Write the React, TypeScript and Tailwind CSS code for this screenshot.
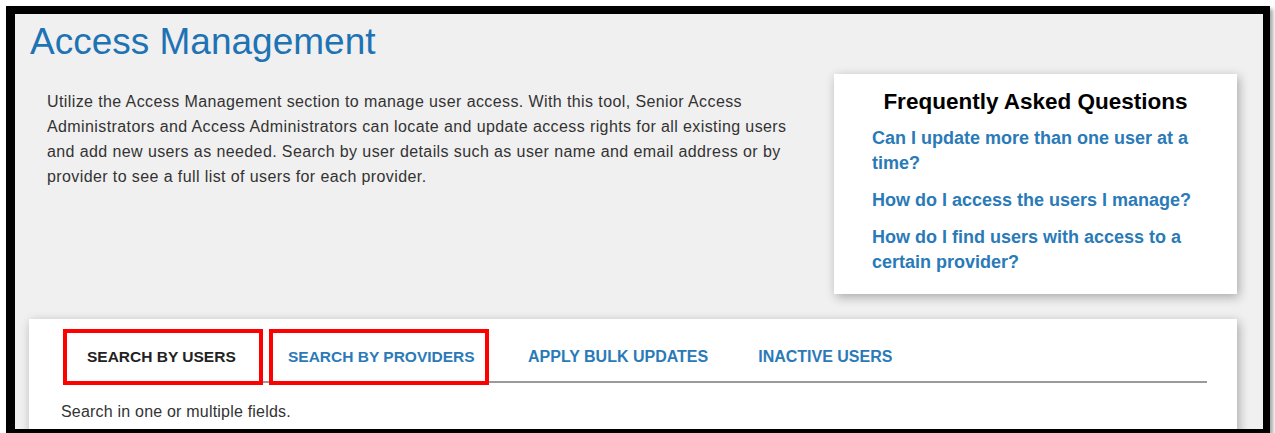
const faqs = [
  "Can I update more than one user at a time?",
  "How do I access the users I manage?",
  "How do I find users with access to a certain provider?",
];

type Tab = {
  label: string;
  active?: boolean;
  flagged?: boolean;
  className: string;
};

const tabs: Tab[] = [
  { label: "SEARCH BY USERS", active: true, flagged: true, className: "w-[200px] pl-[24px] text-[15.5px]" },
  { label: "SEARCH BY PROVIDERS", flagged: true, className: "ml-[6px] w-[220px] pl-[19px] text-[15.5px]" },
  { label: "APPLY BULK UPDATES", className: "pl-[39px] text-[16px]" },
  { label: "INACTIVE USERS", className: "pl-[50px] text-[16px]" },
];

export default function App() {
  return (
    <div className="h-[433px] w-[1275px] overflow-hidden bg-white font-['Liberation_Sans',Arial,sans-serif]">
      <div className="ml-[6px] mr-[5px] mt-[6px] h-[427px] overflow-hidden border-b-[4px] border-l-[9px] border-r-[7px] border-t-[8px] border-black bg-[#f0f0f0] pl-[15px] pr-[26px] pt-[9px] shadow-[3px_3px_4px_rgba(0,0,0,0.35)]">
        <h1 className="text-[37px] leading-none text-[#1e73b5]">Access Management</h1>

        <div className="mt-[14px] flex items-start">
          <p className="ml-[17px] mt-[15px] w-[762px] text-[16px] leading-[25px] tracking-[0.4px] text-[#333]">
            Utilize the Access Management section to manage user access. With this tool, Senior Access
            Administrators and Access Administrators can locate and update access rights for all existing users
            and add new users as needed. Search by user details such as user name and email address or by
            provider to see a full list of users for each provider.
          </p>

          <div className="ml-auto w-[403px] bg-white px-[38px] pb-[19px] pt-[14px] shadow-[2px_3px_10px_rgba(0,0,0,0.3)]">
            <h2 className="text-center text-[22.5px] font-bold leading-[28px] text-black">
              Frequently Asked Questions
            </h2>
            <ul className="mt-[10px] space-y-[12px]">
              {faqs.map((q) => (
                <li key={q}>
                  <a href="#" className="text-[18px] font-bold leading-[25px] text-[#2a7ab8]">
                    {q}
                  </a>
                </li>
              ))}
            </ul>
          </div>
        </div>

        <div className="-ml-px mt-[25px] h-[140px] bg-white pt-[14px] shadow-[2px_3px_10px_rgba(0,0,0,0.3)]">
          <div className="ml-[34px] mr-[30px] flex border-b-2 border-[#9a9a9a]">
            {tabs.map((t) => (
              <div
                key={t.label}
                className={`relative flex h-[48px] items-center font-bold ${t.className} ${
                  t.active ? "text-[#222]" : "text-[#2a7ab8]"
                }`}
              >
                {t.label}
                {t.flagged && (
                  <span className="absolute inset-x-0 -bottom-[4px] -top-[4px] border-4 border-[#ff0000]" />
                )}
              </div>
            ))}
          </div>
          <p className="ml-[32px] mt-[17px] text-[16px] tracking-[0.2px] text-[#333]">
            Search in one or multiple fields.
          </p>
        </div>
      </div>
    </div>
  );
}
